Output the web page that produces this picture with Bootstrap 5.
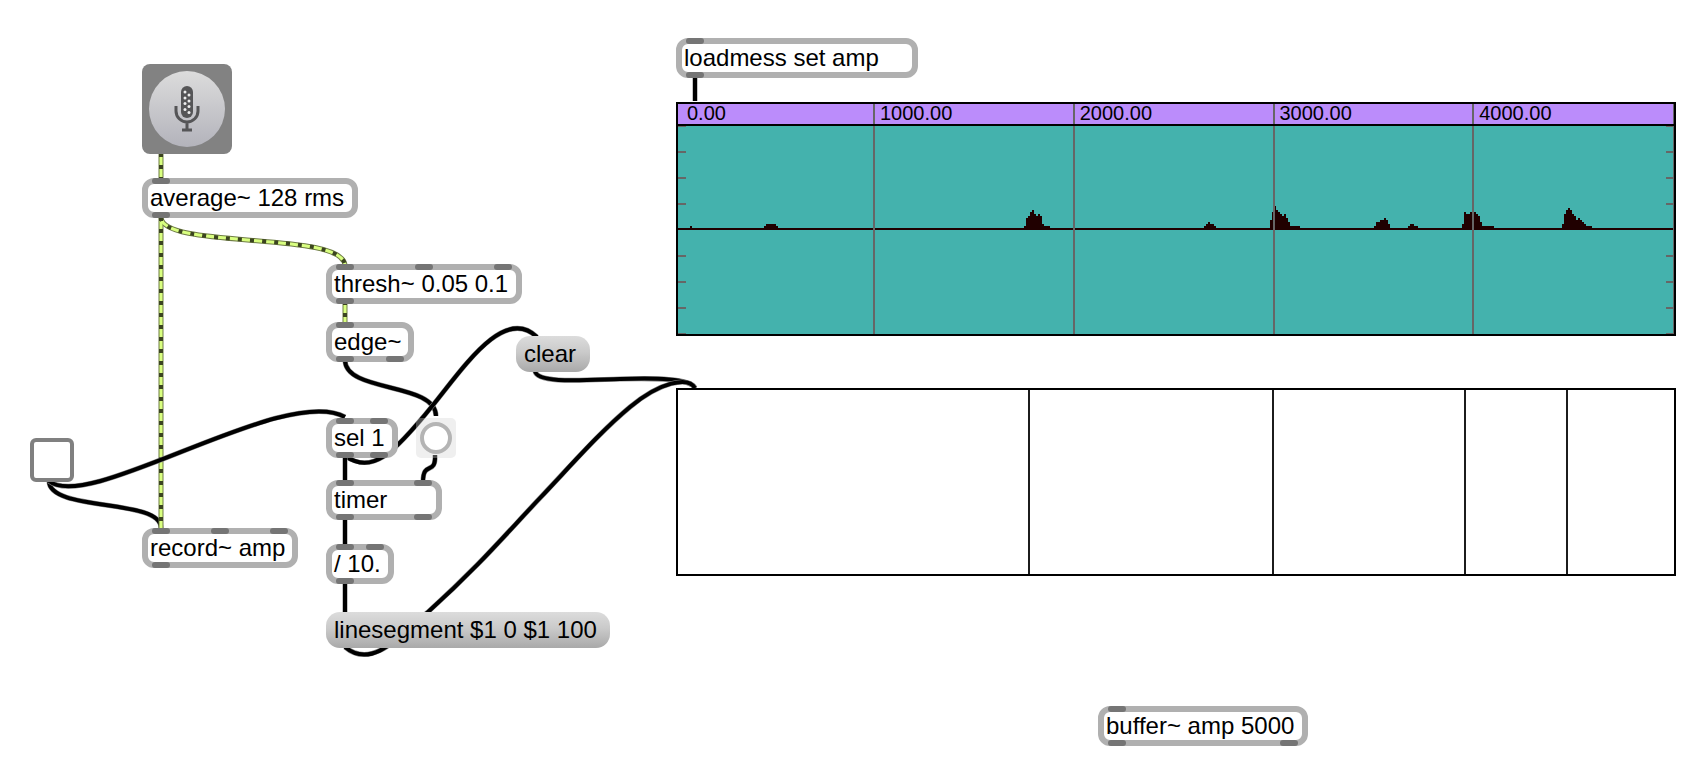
<!DOCTYPE html>
<html lang="en">
<head>
<meta charset="utf-8">
<meta name="viewport" content="width=device-width, initial-scale=1">
<title>Amplitude recorder patch</title>
<link href="https://cdn.jsdelivr.net/npm/bootstrap@5.3.0/dist/css/bootstrap.min.css" rel="stylesheet">
<style>
  body { font-family: "Liberation Sans", Arial, sans-serif; color: #000; font-size: 24px; }
  .patcher { min-height: 772px; background: #fff; }

  /* patch cords */
  .cords { left: 0; top: 0; width: 720px; height: 680px; fill: none; }
  .cord-edge { stroke: #8c8c8c; stroke-width: 5; }
  .cord-core { stroke: #000; stroke-width: 4; }
  .signal-edge { stroke: #6f7d45; stroke-width: 5; }
  .signal-core { stroke: #d9ff80; stroke-width: 3; }
  .signal-dash { stroke: #3b4420; stroke-width: 4; stroke-dasharray: 4 8; }

  /* object boxes */
  .obj { position: absolute; height: 40px; border: 6px solid #b0b0b0; border-radius: 12px;
         background: #fff; padding-left: 2px; line-height: 28px; white-space: nowrap; }
  .port { position: absolute; width: 18px; height: 6px; border-radius: 3px; background: #757575; left: 4px; }
  .port-in { top: -6px; }
  .port-out { bottom: -6px; }

  /* message boxes */
  .msg { position: absolute; height: 36px; border: 0; border-radius: 14px; padding: 0 8px; text-align: left;
         color: #000; background: linear-gradient(#dcdcdc, #cacaca 45%, #a9a9a9); line-height: 34px; white-space: nowrap; }

  #mic { position: absolute; left: 142px; top: 64px; width: 90px; height: 90px; border: 0; border-radius: 8px; background: #828282; }
  #average { left: 142px; top: 178px; width: 216px; }
  #thresh { left: 326px; top: 264px; width: 196px; }
  #edge { left: 326px; top: 322px; width: 88px; }
  #clear { left: 516px; top: 336px; width: 74px; }
  #sel { left: 326px; top: 418px; width: 72px; }
  #bang { position: absolute; left: 416px; top: 418px; width: 40px; height: 40px; border: 0; border-radius: 5px; background: rgba(208, 208, 208, .35); }
  #bang span { width: 32px; height: 32px; border: 4px solid #b4b4b4; background: #fff; }
  #timer { left: 326px; top: 480px; width: 116px; }
  #divide { left: 326px; top: 544px; width: 68px; }
  #segment { left: 326px; top: 612px; width: 284px; }
  #record-toggle { position: absolute; left: 30px; top: 438px; width: 44px; height: 44px; margin: 0; border: 4px solid #808080;
                   border-radius: 6px; background-color: #fff; }
  #record { left: 142px; top: 528px; width: 156px; }
  #loadmess { left: 676px; top: 38px; width: 242px; }
  #buffer { left: 1098px; top: 706px; width: 210px; }

  .at-34 { left: 34px; }
  .at-38 { left: 38px; }
  .at-54 { left: 54px; }
  .at-63 { left: 63px; }
  .at-82 { left: 82px; }
  .at-83 { left: 83px; }
  .at-122 { left: 122px; }
  .at-162 { left: 162px; }
  .at-176 { left: 176px; }

  /* waveform and drawing area stretch with the window */
  #wave { position: absolute; left: 676px; right: 18px; top: 102px; min-width: 500px; border: 2px solid #000; }
  .scale { display: grid; grid-template-columns: 197px repeat(4, 1fr); }
  .scale > * { border-right: 2px solid #666; }
  .scale > :last-child { border-right-width: 1px; }
  .ruler { background: #bb8cfb; border-bottom: 2px solid #000; font-size: 20px; line-height: 18px; height: 22px; }
  .ruler > * { padding-left: 5px; }
  .ruler > :first-child { padding-left: 9px; }
  .trace { height: 208px; background: #44b2ad; }
  .ticks { width: 8px; height: 208px; top: 0; fill: #666; }
  #lcd { position: absolute; left: 676px; right: 18px; top: 388px; height: 188px; min-width: 500px; border: 2px solid #000; background: #fff; }
</style>
</head>
<body>
<main class="patcher position-relative">

  <svg class="cords position-absolute" aria-hidden="true">
    <defs>
      <path id="c1" d="M49 481C49 512 161 498 161 528"/>
      <path id="c2" d="M49 481C89 514 285 383 345 417"/>
      <path id="c3" d="M345 360C345 393 436 382 436 416"/>
      <path id="c4" d="M345 456C372 474 392 456 433 405C466 364 505 306 537 337"/>
      <path id="c5" d="M345 456V482M345 518V546M345 582V612M695 76V101"/>
      <path id="c6" d="M435 455C436 476 423 460 423 482"/>
      <path id="c7" d="M535 371C537 384 585 380 620 379C655 378 690 378 695 388"/>
      <path id="c8" d="M345 647C372 670 400 636 428 612C480 565 505 535 540 498S600 432 630 407S688 376 695 388"/>
      <path id="s1" d="M161 153V180"/>
      <path id="s2" d="M161 217V530"/>
      <path id="s3" d="M161 217C161 250 345 230 345 266"/>
      <path id="s4" d="M345 301V324"/>
    </defs>
    <use href="#c1" class="cord-edge"/><use href="#c1" class="cord-core"/>
    <g class="signal-edge"><use href="#s1"/><use href="#s2"/><use href="#s3"/><use href="#s4"/></g>
    <g class="signal-core"><use href="#s1"/><use href="#s2"/><use href="#s3"/><use href="#s4"/></g>
    <g class="signal-dash"><use href="#s1"/><use href="#s2"/><use href="#s3"/><use href="#s4"/></g>
    <use href="#c2" class="cord-edge"/><use href="#c2" class="cord-core"/>
    <use href="#c3" class="cord-edge"/><use href="#c3" class="cord-core"/>
    <use href="#c4" class="cord-edge"/><use href="#c4" class="cord-core"/>
    <use href="#c5" class="cord-edge"/><use href="#c5" class="cord-core"/>
    <use href="#c6" class="cord-edge"/><use href="#c6" class="cord-core"/>
    <use href="#c7" class="cord-edge"/><use href="#c7" class="cord-core"/>
    <use href="#c8" class="cord-edge"/><use href="#c8" class="cord-core"/>
  </svg>

  <button id="mic" type="button" class="p-0 d-block" aria-label="Audio input">
    <svg class="d-block" width="90" height="90" viewBox="0 0 90 90" fill="none" aria-hidden="true">
      <defs><linearGradient id="dome" x1="0" y1="0" x2="0" y2="1"><stop stop-color="#dcdcdc"/><stop offset="1" stop-color="#b3b3bb"/></linearGradient></defs>
      <circle cx="45" cy="45" r="38" fill="url(#dome)"/>
      <rect x="39" y="22" width="12" height="32" rx="6" fill="#555557"/>
      <path d="M34 42V47a11 11 0 0 0 22 0V42M45 58V66M40 66H50" stroke="#555557" stroke-width="3"/>
      <g fill="#eee"><circle cx="43" cy="28" r="1.5"/><circle cx="47" cy="31" r="1.5"/><circle cx="43" cy="34" r="1.5"/><circle cx="47" cy="37" r="1.5"/><circle cx="43" cy="39.5" r="1.5"/><circle cx="47" cy="42.5" r="1.5"/><circle cx="43" cy="45.5" r="1.5"/><circle cx="47" cy="48.5" r="1.5"/></g>
    </svg>
  </button>

  <div class="obj" id="average">average~ 128 rms<i class="port port-in"></i><i class="port port-out"></i></div>
  <div class="obj" id="thresh">thresh~ 0.05 0.1<i class="port port-in"></i><i class="port port-in at-83"></i><i class="port port-in at-162"></i><i class="port port-out"></i></div>
  <div class="obj" id="edge">edge~<i class="port port-in"></i><i class="port port-out"></i><i class="port port-out at-54"></i></div>
  <button class="msg" id="clear" type="button">clear</button>
  <div class="obj" id="sel">sel 1<i class="port port-in"></i><i class="port port-in at-38"></i><i class="port port-out"></i><i class="port port-out at-38"></i></div>
  <button id="bang" type="button" class="p-0 d-flex align-items-center justify-content-center" aria-label="Bang"><span class="rounded-circle"></span></button>
  <div class="obj" id="timer">timer<i class="port port-in"></i><i class="port port-in at-82"></i><i class="port port-out"></i><i class="port port-out at-82"></i></div>
  <div class="obj" id="divide">/ 10.<i class="port port-in"></i><i class="port port-in at-34"></i><i class="port port-out"></i></div>
  <button class="msg" id="segment" type="button">linesegment $1 0 $1 100</button>
  <input class="form-check-input" id="record-toggle" type="checkbox" aria-label="Record">
  <div class="obj" id="record">record~ amp<i class="port port-in"></i><i class="port port-in at-63"></i><i class="port port-in at-122"></i><i class="port port-out"></i></div>
  <div class="obj" id="loadmess">loadmess set amp<i class="port port-in"></i><i class="port port-out"></i></div>

  <section id="wave" aria-label="Waveform">
    <div class="scale ruler"><span>0.00</span><span>1000.00</span><span>2000.00</span><span>3000.00</span><span>4000.00</span></div>
    <div class="trace position-relative">
      <svg class="position-absolute top-0 start-0 w-100 h-100" viewBox="678 126 996 208" preserveAspectRatio="none" shape-rendering="crispEdges" fill="#200000" aria-hidden="true">
        <path d="M678 230V228H690V226H692V228H764V226H766V224H776V226H778V228H1024V226H1026V218H1028V216H1030V212H1032V210H1034V214H1036V216H1038V214H1040V216H1042V224H1044V226H1050V228H1204V226H1206V224H1208V222H1210V224H1214V226H1216V228H1270V220H1272V212H1274V206H1276V210H1278V212H1280V214H1282V216H1284V214H1286V218H1288V222H1290V226H1300V228H1374V226H1376V222H1380V220H1384V218H1386V220H1388V224H1390V228H1408V226H1410V224H1414V226H1418V228H1462V224H1464V212H1466V214H1470V212H1472V210H1474V212H1476V214H1478V216H1480V222H1482V226H1494V228H1562V224H1564V214H1566V210H1568V208H1570V210H1572V214H1574V216H1576V220H1578V218H1580V220H1582V222H1584V224H1586V226H1592V228H1674V230Z"/>
      </svg>
      <div class="scale position-relative h-100"><i></i><i></i><i></i><i></i><i></i></div>
      <svg class="ticks position-absolute start-0" aria-hidden="true"><path id="tickset" d="M0 0H8V1H0ZM0 25H8V27H0ZM0 51H8V53H0ZM0 77H8V79H0ZM0 129H8V131H0ZM0 155H8V157H0ZM0 181H8V183H0ZM0 207H8V208H0Z"/></svg>
      <svg class="ticks position-absolute end-0" aria-hidden="true"><use href="#tickset"/></svg>
    </div>
  </section>

  <section id="lcd" aria-label="Drawn segments">
    <svg class="d-block w-100 h-100" viewBox="678 390 996 184" preserveAspectRatio="none" stroke="#1c1c1c" stroke-width="2" aria-hidden="true">
      <path d="M1029 390V574M1273 390V574M1465 390V574M1567 390V574"/>
    </svg>
  </section>

  <div class="obj" id="buffer">buffer~ amp 5000<i class="port port-in"></i><i class="port port-out"></i><i class="port port-out at-176"></i></div>
</main>
<script src="https://cdn.jsdelivr.net/npm/bootstrap@5.3.0/dist/js/bootstrap.bundle.min.js"></script>
</body>
</html>
